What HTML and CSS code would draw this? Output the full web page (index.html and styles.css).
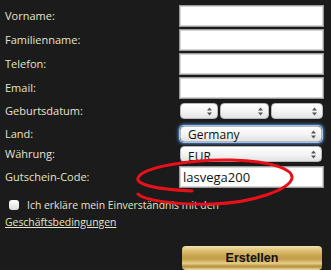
FILE: index.html
```html
<!DOCTYPE html>
<html lang="de">
  <head>
    <meta charset="UTF-8" />
    <meta name="viewport" content="width=device-width, initial-scale=1.0" />
    <title>Registrierung</title>
    <link rel="stylesheet" href="styles.css">
  </head>
  <body>
    <form class="signup">
      <div class="row r-text">
        <label class="label">Vorname:</label>
        <div class="field"><input class="input" type="text" /></div>
      </div>
      <div class="row r-text">
        <label class="label">Familienname:</label>
        <div class="field"><input class="input" type="text" /></div>
      </div>
      <div class="row r-text">
        <label class="label">Telefon:</label>
        <div class="field"><input class="input" type="text" /></div>
      </div>
      <div class="row r-text">
        <label class="label">Email:</label>
        <div class="field"><input class="input" type="text" /></div>
      </div>
      <div class="row r-date">
        <label class="label">Geburtsdatum:</label>
        <div class="field dates">
          <div class="select day"><span></span><svg class="arrows" width="5" height="9" viewBox="0 0 5 9"><path d="M0 3.5 L2.5 0.5 L5 3.5 Z M0 5.5 L2.5 8.5 L5 5.5 Z" fill="#555"/></svg></div>
          <div class="select month"><span></span><svg class="arrows" width="5" height="9" viewBox="0 0 5 9"><path d="M0 3.5 L2.5 0.5 L5 3.5 Z M0 5.5 L2.5 8.5 L5 5.5 Z" fill="#555"/></svg></div>
          <div class="select year"><span></span><svg class="arrows" width="5" height="9" viewBox="0 0 5 9"><path d="M0 3.5 L2.5 0.5 L5 3.5 Z M0 5.5 L2.5 8.5 L5 5.5 Z" fill="#555"/></svg></div>
        </div>
      </div>
      <div class="row r-land">
        <label class="label">Land:</label>
        <div class="field">
          <div class="select wide focus"><span>Germany</span><svg class="arrows" width="5" height="9" viewBox="0 0 5 9"><path d="M0 3.5 L2.5 0.5 L5 3.5 Z M0 5.5 L2.5 8.5 L5 5.5 Z" fill="#555"/></svg></div>
        </div>
      </div>
      <div class="row r-cur">
        <label class="label">Währung:</label>
        <div class="field">
          <div class="select wide low"><span>EUR</span><svg class="arrows" width="5" height="9" viewBox="0 0 5 9"><path d="M0 3.5 L2.5 0.5 L5 3.5 Z M0 5.5 L2.5 8.5 L5 5.5 Z" fill="#555"/></svg></div>
        </div>
      </div>
      <div class="row r-code">
        <label class="label">Gutschein-Code:</label>
        <div class="field"><input class="input code" type="text" value="lasvega200" /></div>
      </div>

      <div class="terms">
        <span class="check"></span>
        <span>Ich erkläre mein Einverständnis mit den</span>
      </div>
      <a class="terms-link" href="#">Geschäftsbedingungen</a>

      <div class="actions">
        <button class="submit" type="button">Erstellen</button>
      </div>

      <!-- hand-drawn marker round the voucher code -->
      <svg class="marker" width="170" height="56" viewBox="0 0 170 56">
        <path d="M60 35 C20 33 4 28 6 22 C10 11 60 3 100 4 C142 5 161 14 160 22 C158 33 122 47 80 48 C42 49 12 44 6 38" fill="none" stroke="#e8111a" stroke-width="3" stroke-linecap="round"/>
      </svg>
    </form>
  </body>
</html>
```

FILE: styles.css
```css
body {
  margin: 0;
  padding: 4px 0 0 5px;
  background: #1b1b1b;
  font-family: "Open Sans", "DejaVu Sans", sans-serif;
  font-size: 11px;
  color: #e4e4c8;
}
.signup {
  position: relative;
  width: 320px;
}
.row {
  display: grid;
  grid-template-columns: 174px 145px;
  align-items: center;
}
.r-text { height: 24px; }
.r-date { height: 22px; }
.r-land { height: 24px; }
.r-cur { height: 16px; }
.r-code { height: 30px; }
.label {
  line-height: 14px;
}
.field {
  display: flex;
  align-items: center;
}
.input {
  box-sizing: border-box;
  width: 145px;
  height: 22px;
  margin: 0;
  border: 1px solid #9a9a9a;
  box-shadow: inset 0 0 0 1px #d4d4d4;
  background: #fff;
  padding: 1px 4px;
  font-family: "Open Sans", "DejaVu Sans", sans-serif;
  font-size: 13px;
  color: #111;
}
.code {
  padding-left: 3px;
}
.dates {
  gap: 2px;
  padding-left: 1px;
}
.select {
  box-sizing: border-box;
  height: 16px;
  display: flex;
  align-items: center;
  justify-content: space-between;
  padding: 0 5px 0 7px;
  border-radius: 4px;
  background: linear-gradient(#ffffff, #f3f3f3 55%, #e2e2e2);
  border: 1px solid #b8b8b8;
  font-size: 12px;
  color: #111;
}
.low span {
  margin-top: 4px;
}
.day { width: 38px; }
.month { width: 49px; }
.year { width: 52px; }
.wide {
  width: 142px;
  margin-left: 1px;
}
.focus {
  box-shadow: 0 0 0 1px #9cc2ec, 0 0 3px 2px #4a7fc0;
}
.terms {
  display: flex;
  align-items: center;
  gap: 8px;
  height: 16px;
  margin-top: 5px;
  padding-left: 4px;
  font-size: 10.4px;
}
.check {
  width: 10px;
  height: 10px;
  border-radius: 3px;
  background: linear-gradient(#ffffff, #dcdcdc);
}
.terms-link {
  display: block;
  margin-top: 1px;
  line-height: 16px;
  font-size: 10.4px;
  color: #e4e4c8;
  text-decoration: underline;
  width: max-content;
}
.actions {
  display: flex;
  padding: 16px 0 0 177px;
}
.submit {
  width: 140px;
  height: 24px;
  border: none;
  border-radius: 4px;
  background: linear-gradient(#f4e4ae 0%, #e2c77f 15%, #c9a551 40%, #c4a04c 55%, #e6cd86 72%, #b48e3e 86%, #f2e1a6 100%);
  font-family: "Liberation Sans", Arial, sans-serif;
  font-weight: bold;
  font-size: 12.5px;
  color: #111;
}
.marker {
  position: absolute;
  left: 127px;
  top: 152px;
}
```
